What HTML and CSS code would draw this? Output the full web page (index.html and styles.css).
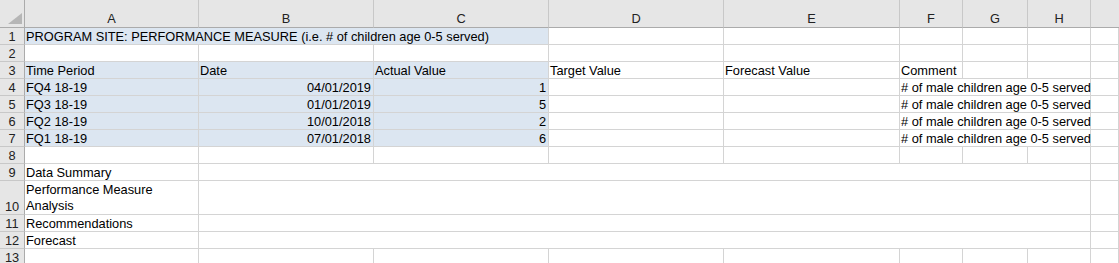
FILE: index.html
```html
<!DOCTYPE html>
<html>
<head>
<meta charset="utf-8">
<link rel="stylesheet" href="styles.css">
</head>
<body>
<div class="sheet">
  <div class="corner"><svg class="tri" width="16" height="12" viewBox="0 0 16 12"><polygon points="15,0 15,11 1,11" fill="#b6b6b6"/></svg></div>
  <div class="ch">A</div><div class="ch">B</div><div class="ch">C</div><div class="ch">D</div><div class="ch">E</div><div class="ch">F</div><div class="ch">G</div><div class="ch">H</div><div class="ch last"></div>

  <div class="rh">1</div>
  <div class="c blue span3">PROGRAM SITE: PERFORMANCE MEASURE (i.e. # of children age 0-5 served)</div>
  <div class="c"></div><div class="c"></div><div class="c"></div><div class="c"></div><div class="c"></div><div class="c"></div>

  <div class="rh">2</div>
  <div class="c"></div><div class="c"></div><div class="c"></div><div class="c"></div><div class="c"></div><div class="c"></div><div class="c"></div><div class="c"></div><div class="c"></div>

  <div class="rh">3</div>
  <div class="c blue">Time Period</div><div class="c blue">Date</div><div class="c blue">Actual Value</div><div class="c">Target Value</div><div class="c">Forecast Value</div><div class="c">Comment</div><div class="c"></div><div class="c"></div><div class="c"></div>

  <div class="rh">4</div>
  <div class="c blue">FQ4 18-19</div><div class="c blue num">04/01/2019</div><div class="c blue num">1</div><div class="c"></div><div class="c"></div><div class="c span3">#&nbsp;of male children age 0-5 served</div><div class="c"></div>

  <div class="rh">5</div>
  <div class="c blue">FQ3 18-19</div><div class="c blue num">01/01/2019</div><div class="c blue num">5</div><div class="c"></div><div class="c"></div><div class="c span3">#&nbsp;of male children age 0-5 served</div><div class="c"></div>

  <div class="rh">6</div>
  <div class="c blue">FQ2 18-19</div><div class="c blue num">10/01/2018</div><div class="c blue num">2</div><div class="c"></div><div class="c"></div><div class="c span3">#&nbsp;of male children age 0-5 served</div><div class="c"></div>

  <div class="rh">7</div>
  <div class="c blue">FQ1 18-19</div><div class="c blue num">07/01/2018</div><div class="c blue num">6</div><div class="c"></div><div class="c"></div><div class="c span3">#&nbsp;of male children age 0-5 served</div><div class="c"></div>

  <div class="rh">8</div>
  <div class="c"></div><div class="c"></div><div class="c"></div><div class="c"></div><div class="c"></div><div class="c"></div><div class="c"></div><div class="c"></div><div class="c"></div>

  <div class="rh">9</div>
  <div class="c">Data Summary</div><div class="c span7"></div><div class="c"></div>

  <div class="rh">10</div>
  <div class="c wrap">Performance Measure<br>Analysis</div><div class="c span7"></div><div class="c"></div>

  <div class="rh">11</div>
  <div class="c">Recommendations</div><div class="c span7"></div><div class="c"></div>

  <div class="rh">12</div>
  <div class="c">Forecast</div><div class="c span7"></div><div class="c"></div>

  <div class="rh">13</div>
  <div class="c"></div><div class="c"></div><div class="c"></div><div class="c"></div><div class="c"></div><div class="c"></div><div class="c"></div><div class="c"></div><div class="c"></div>
</div>
</body>
</html>
```

FILE: styles.css
```css
html, body {
  margin: 0;
  padding: 0;
  background: #ffffff;
}
.sheet {
  width: 1119px;
  height: 263px;
  overflow: hidden;
  display: grid;
  grid-template-columns: 25px 174px 175px 175px 175px 176px 63px 65px 63px 1fr;
  grid-template-rows: 28px repeat(9, 17px) 34px 17px 17px 17px;
  font-family: "Liberation Sans", Arial, sans-serif;
  font-size: 12.8px;
  line-height: 15px;
  color: #000;
}
.sheet > div {
  box-sizing: border-box;
  min-width: 0;
}
.corner {
  background: #e6e6e6;
  border-right: 1px solid #ababab;
  border-bottom: 1px solid #ababab;
  position: relative;
}
.tri {
  position: absolute;
  right: 1px;
  bottom: 2px;
}
.ch {
  background: #e6e6e6;
  border-right: 1px solid #c8c8c8;
  border-bottom: 1px solid #ababab;
  display: flex;
  align-items: center;
  justify-content: center;
  padding-top: 10px;
  color: #222;
}
.ch.last {
  border-right: none;
}
.rh {
  background: #e6e6e6;
  border-right: 1px solid #ababab;
  border-bottom: 1px solid #c8c8c8;
  display: flex;
  align-items: flex-end;
  justify-content: center;
  color: #222;
}
.c {
  border-right: 1px solid #d4d4d4;
  border-bottom: 1px solid #d4d4d4;
  display: flex;
  align-items: flex-end;
  padding: 0 2px 0 1px;
  white-space: nowrap;
  overflow: visible;
}
.blue {
  background: #dce6f1;
}
.num {
  justify-content: flex-end;
}
.span3 {
  grid-column: span 3;
}
.span7 {
  grid-column: span 7;
}
.wrap {
  white-space: normal;
  align-items: flex-end;
  line-height: 16px;
}
```
